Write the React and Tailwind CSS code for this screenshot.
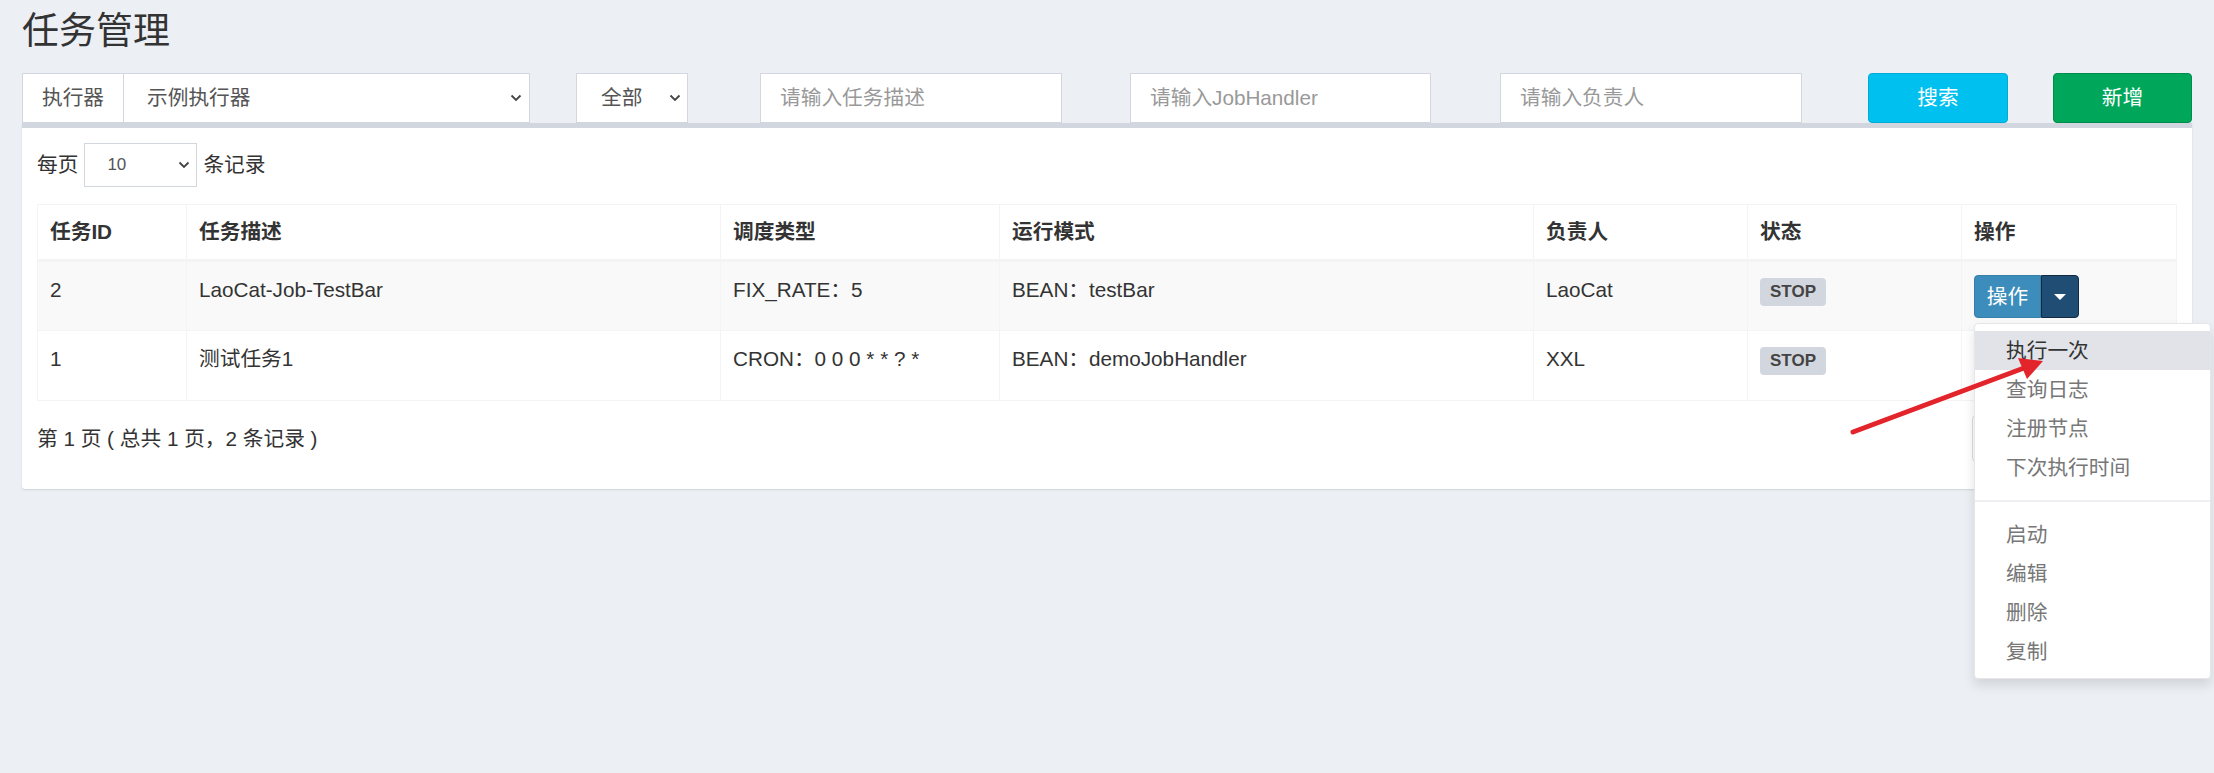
import React from 'react';

const Chevron = ({ className }) => (
  <svg viewBox="0 0 12 8" className={className} fill="none" stroke="#444" strokeWidth="1.8">
    <path d="M1.5 1.5 L6 6 L10.5 1.5" />
  </svg>
);

const rows = [
  { id: '2', desc: 'LaoCat-Job-TestBar', type: 'FIX_RATE：5', mode: 'BEAN：testBar', owner: 'LaoCat', striped: true, open: true },
  { id: '1', desc: '测试任务1', type: 'CRON：0 0 0 * * ? *', mode: 'BEAN：demoJobHandler', owner: 'XXL', striped: false, open: false },
];

const menuTop = ['执行一次', '查询日志', '注册节点', '下次执行时间'];
const menuBottom = ['启动', '编辑', '删除', '复制'];

// 操作按钮 + 展开的下拉菜单（第二行的按钮被菜单盖住）
const OpButton = () => (
  <div className="relative mt-[1px] flex h-[43px] w-[105px]">
    <button className="w-[67px] rounded-l-[4px] border border-[#367fa9] bg-[#3c8dbc] text-white">操作</button>
    <button className="flex w-[38px] items-center justify-center rounded-r-[4px] border border-[#122b40] bg-[#204d74]">
      <span className="h-0 w-0 border-x-[6px] border-t-[6px] border-x-transparent border-t-white" />
    </button>
    <div className="absolute left-0 top-[48px] z-20 w-[237px] rounded-[4px] border border-[#e6e6e6] bg-white py-[7px] shadow-[0_6px_12px_rgba(0,0,0,0.12)]">
      {menuTop.map((m, i) => (
        <div
          key={m}
          className={`h-[39px] pl-[31px] leading-[39px] ${i === 0 ? 'bg-[#e1e3e9] text-[#333]' : 'text-[#777]'}`}
        >
          {m}
        </div>
      ))}
      <div className="my-[13px] h-[2px] bg-[#eeeff2]" />
      {menuBottom.map((m) => (
        <div key={m} className="h-[39px] pl-[31px] leading-[39px] text-[#777]">
          {m}
        </div>
      ))}
    </div>
  </div>
);

const Badge = () => (
  <div className="flex pt-[3px]">
    <span className="flex h-[28px] items-center rounded-[4px] bg-[#d2d6de] px-[10px] text-[17px] font-bold text-[#444]">STOP</span>
  </div>
);

export default function App() {
  return (
    <div className="relative min-h-[773px] bg-[#ecf0f5] px-[22px] font-['Liberation_Sans','Noto_Sans_CJK_SC',sans-serif] text-[20.7px] text-[#333]">
      <h1 className="h-[73px] pt-[10px] text-[37px] font-normal leading-[44px]">任务管理</h1>

      {/* 筛选 */}
      <div className="flex h-[50px]">
        <div className="flex w-[508px] border border-[#d2d6de] bg-white">
          <div className="flex w-[101px] items-center justify-center border-r border-[#d2d6de] text-[#555]">执行器</div>
          <div className="flex flex-1 items-center justify-between pl-[23px] pr-[7px] text-[#555]">
            示例执行器
            <Chevron className="h-[8px] w-[12px]" />
          </div>
        </div>
        <div className="ml-[46px] flex w-[112px] items-center justify-between border border-[#d2d6de] bg-white pl-[24px] pr-[6px] text-[#555]">
          全部
          <Chevron className="h-[8px] w-[12px]" />
        </div>
        <div className="ml-[72px] flex w-[302px] items-center border border-[#d2d6de] bg-white pl-[19px] text-[#999]">请输入任务描述</div>
        <div className="ml-[68px] flex w-[301px] items-center border border-[#d2d6de] bg-white pl-[19px] text-[#999]">请输入JobHandler</div>
        <div className="ml-[69px] flex w-[302px] items-center border border-[#d2d6de] bg-white pl-[19px] text-[#999]">请输入负责人</div>
        <button className="ml-[66px] w-[140px] rounded-[4px] border border-[#00acd6] bg-[#00c0ef] text-white">搜索</button>
        <button className="ml-[45px] w-[139px] rounded-[4px] border border-[#008d4c] bg-[#00a65a] text-white">新增</button>
      </div>

      {/* 列表 */}
      <div className="rounded-b-[3px] border-t-[5px] border-[#d2d6de] bg-white px-[15px] pb-[27px] pt-[15px] shadow-[0_1px_2px_rgba(0,0,0,0.12)]">
        <div className="flex h-[44px] items-center">
          <span>每页</span>
          <div className="mx-[6px] flex h-[44px] w-[113px] items-center justify-between border border-[#d2d6de] pl-[22px] pr-[6px] text-[17px] text-[#555]">
            10
            <Chevron className="h-[8px] w-[12px]" />
          </div>
          <span>条记录</span>
        </div>

        <table className="mt-[17px] w-[2139px] table-fixed border-collapse border border-[#f4f4f4]">
          <colgroup>
            <col className="w-[149px]" />
            <col className="w-[534px]" />
            <col className="w-[279px]" />
            <col className="w-[534px]" />
            <col className="w-[214px]" />
            <col className="w-[214px]" />
            <col className="w-[215px]" />
          </colgroup>
          <thead>
            <tr className="border-b-[3px] border-[#f4f4f4] text-left">
              {['任务ID', '任务描述', '调度类型', '运行模式', '负责人', '状态', '操作'].map((h) => (
                <th key={h} className="h-[56px] border-x border-[#f4f4f4] px-[12px] align-middle font-bold">
                  {h}
                </th>
              ))}
            </tr>
          </thead>
          <tbody>
            {rows.map((r) => (
              <tr key={r.id} className={`border-t border-[#f4f4f4] ${r.striped ? 'bg-[#f9f9f9]' : 'bg-white'}`}>
                <td className="h-[70px] border border-[#f4f4f4] px-[12px] pt-[13px] align-top leading-[30px]">{r.id}</td>
                <td className="border border-[#f4f4f4] px-[12px] pt-[13px] align-top leading-[30px]">{r.desc}</td>
                <td className="border border-[#f4f4f4] px-[12px] pt-[13px] align-top leading-[30px]">{r.type}</td>
                <td className="border border-[#f4f4f4] px-[12px] pt-[13px] align-top leading-[30px]">{r.mode}</td>
                <td className="border border-[#f4f4f4] px-[12px] pt-[13px] align-top leading-[30px]">{r.owner}</td>
                <td className="border border-[#f4f4f4] px-[12px] pt-[13px] align-top">
                  <Badge />
                </td>
                <td className={`border border-[#f4f4f4] px-[12px] pt-[12px] align-top ${r.open ? 'relative z-20' : ''}`}>
                  {r.open && <OpButton />}
                </td>
              </tr>
            ))}
          </tbody>
        </table>

        <div className="mt-[14px] flex h-[47px] items-center justify-between">
          <span>第 1 页 ( 总共 1 页，2 条记录 )</span>
          {/* 分页，被菜单挡住 */}
          <div className="h-[47px] w-[205px] rounded-[4px] border border-[#ddd]" />
        </div>
      </div>

      {/* 标注箭头 */}
      <svg className="pointer-events-none absolute left-0 top-0 z-30 h-[773px] w-[2214px]" viewBox="0 0 2214 773">
        <line x1="1853" y1="432" x2="2024" y2="368" stroke="#e3242b" strokeWidth="5" strokeLinecap="round" />
        <polygon points="2043,361 2018,358 2027,379" fill="#e3242b" />
      </svg>
    </div>
  );
}
